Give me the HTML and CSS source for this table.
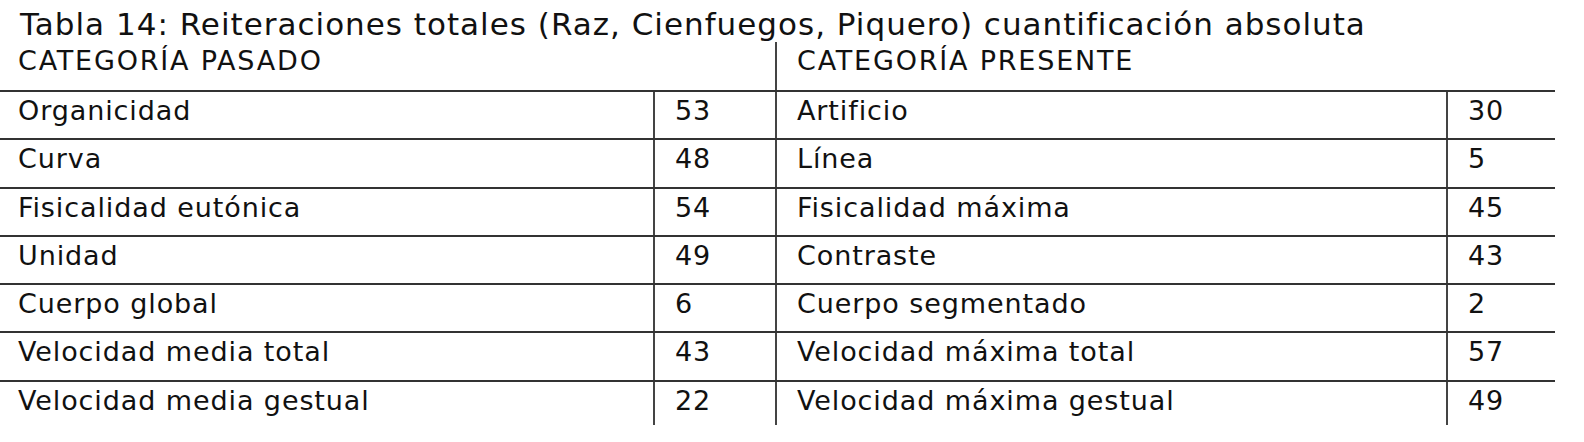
FILE: index.html
```html
<!DOCTYPE html>
<html lang="es">
<head>
<meta charset="utf-8">
<title>Tabla 14</title>
<link rel="stylesheet" href="styles.css">
</head>
<body>
<div class="page">
  <h1 class="caption">Tabla 14: Reiteraciones totales (Raz, Cienfuegos, Piquero) cuantificación absoluta</h1>
  <table class="data">
    <colgroup>
      <col class="c-name-l"><col class="c-num-l"><col class="c-name-r"><col class="c-num-r">
    </colgroup>
    <thead>
      <tr class="head">
        <th colspan="2" class="first">CATEGORÍA PASADO</th>
        <th colspan="2">CATEGORÍA PRESENTE</th>
      </tr>
    </thead>
    <tbody>
      <tr><td class="first">Organicidad</td><td>53</td><td>Artificio</td><td>30</td></tr>
      <tr><td class="first">Curva</td><td>48</td><td>Línea</td><td>5</td></tr>
      <tr><td class="first">Fisicalidad eutónica</td><td>54</td><td>Fisicalidad máxima</td><td>45</td></tr>
      <tr><td class="first">Unidad</td><td>49</td><td>Contraste</td><td>43</td></tr>
      <tr><td class="first">Cuerpo global</td><td>6</td><td>Cuerpo segmentado</td><td>2</td></tr>
      <tr><td class="first">Velocidad media total</td><td>43</td><td>Velocidad máxima total</td><td>57</td></tr>
      <tr class="last"><td class="first">Velocidad media gestual</td><td>22</td><td>Velocidad máxima gestual</td><td>49</td></tr>
    </tbody>
  </table>
</div>
</body>
</html>
```

FILE: styles.css
```css
html, body {
  margin: 0;
  padding: 0;
  background: #ffffff;
}

body {
  font-family: "DejaVu Sans", Verdana, sans-serif;
  color: #111111;
}

.page {
  padding: 0;
}

.caption {
  margin: 0;
  padding: 9px 0 0 20px;
  height: 42px;
  box-sizing: border-box;
  font-size: 31px;
  font-weight: normal;
  line-height: 30px;
  letter-spacing: 1px;
  white-space: nowrap;
}

.data {
  border-collapse: collapse;
  table-layout: fixed;
  width: 1555px;
  font-size: 27px;
  line-height: 30px;
  letter-spacing: 0.9px;
}

.c-name-l { width: 654px; }
.c-num-l { width: 122px; }
.c-name-r { width: 671px; }
.c-num-r { width: 108px; }

.data th,
.data td {
  padding: 4px 0 12px 20px;
  text-align: left;
  font-weight: normal;
  border-left: 2px solid #444444;
  border-bottom: 2px solid #333333;
  white-space: nowrap;
}

.data th {
  padding-top: 4px;
  padding-bottom: 14px;
  letter-spacing: 1.8px;
}

.data .first {
  border-left: none;
  padding-left: 18px;
}

.data tbody tr td {
  padding-bottom: 12.3px;
}

.data tr.last td {
  border-bottom: none;
  padding-bottom: 9px;
}
```
